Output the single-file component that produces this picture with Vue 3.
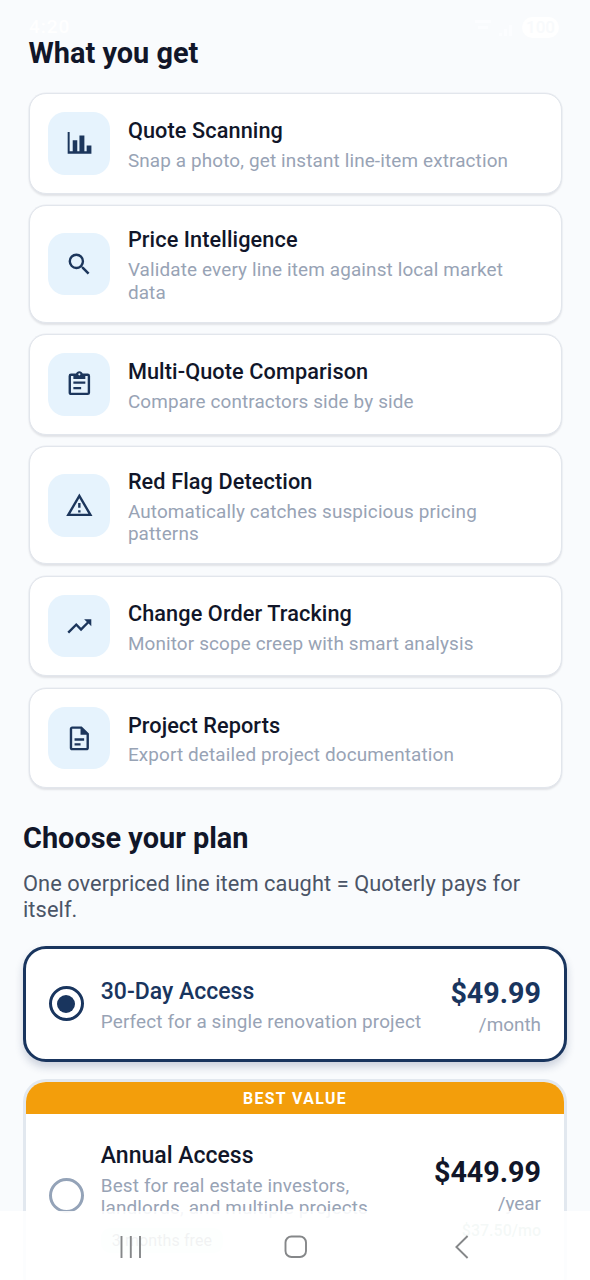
<script setup>
const features = [
  { icon: 'chart', title: 'Quote Scanning', desc: 'Snap a photo, get instant line-item extraction' },
  { icon: 'search', title: 'Price Intelligence', desc: 'Validate every line item against local market data' },
  { icon: 'clipboard', title: 'Multi-Quote Comparison', desc: 'Compare contractors side by side' },
  { icon: 'warning', title: 'Red Flag Detection', desc: 'Automatically catches suspicious pricing patterns' },
  { icon: 'trend', title: 'Change Order Tracking', desc: 'Monitor scope creep with smart analysis' },
  { icon: 'doc', title: 'Project Reports', desc: 'Export detailed project documentation' },
]
</script>

<template>
  <div class="screen">
    <div class="status">
      <span>4:20</span>
      <svg class="signal" viewBox="0 0 44 20"><path d="M2 3h16v3H2zM5 9h10v3H5zM26 16h3v3h-3zM31 12h3v7h-3zM36 8h3v11h-3z" /></svg>
      <span class="battery">100</span>
    </div>

    <main class="content">
      <h2 class="heading get">What you get</h2>
      <section class="features">
        <article v-for="f in features" :key="f.title" class="feature">
          <div class="tile">
            <svg v-if="f.icon === 'chart'" viewBox="0 0 29 29">
              <path d="M2.7 3h2v19.5h22V25h-24zM7.8 11.4h4.6v12H7.8zM14.6 6.6h5v17h-5zM21.9 16.8h4.8v7h-4.8z" />
            </svg>
            <svg v-else-if="f.icon === 'search'" viewBox="0 0 24 24">
              <path d="M15.5 14h-.79l-.28-.27A6.47 6.47 0 0 0 16 9.5 6.5 6.5 0 1 0 9.5 16c1.61 0 3.09-.59 4.23-1.57l.27.28v.79l5 4.99L20.49 19zm-6 0a4.5 4.5 0 1 1 0-9 4.5 4.5 0 0 1 0 9" />
            </svg>
            <svg v-else-if="f.icon === 'clipboard'" viewBox="0 0 24 24">
              <path d="M7 14.2h6.5V16H7zm0-4.5h10v1.9H7zM19 3h-4.18C14.4 1.84 13.3 1 12 1s-2.4.84-2.82 2H5a2 2 0 0 0-2 2v14c0 1.1.9 2 2 2h14a2 2 0 0 0 2-2V5a2 2 0 0 0-2-2m-7-.25a.9.9 0 1 1 0 1.8.9.9 0 0 1 0-1.8M19 19H5V5h2v2.6h10V5h2z" />
            </svg>
            <svg v-else-if="f.icon === 'warning'" viewBox="0 0 24 24">
              <path d="M12 5.99 19.53 19H4.47zM12 2 1 21h22zm1 14h-2v2h2zm0-6h-2v4h2z" />
            </svg>
            <svg v-else-if="f.icon === 'trend'" viewBox="0 0 24 24">
              <path d="m16 6 2.29 2.29-4.88 4.88-4-4L2 16.59 3.41 18l6-6 4 4 6.3-6.29L22 12V6z" />
            </svg>
            <svg v-else viewBox="0 0 24 24">
              <path d="M8 16h5v2H8zm0-4h8v2H8zm6-10H6c-1.1 0-2 .9-2 2v16c0 1.1.89 2 1.99 2H18c1.1 0 2-.9 2-2V8zm4 18H6V4h7v5h5z" />
            </svg>
          </div>
          <div class="copy">
            <h3>{{ f.title }}</h3>
            <p>{{ f.desc }}</p>
          </div>
        </article>
      </section>

      <section class="plans">
        <h2 class="heading choose">Choose your plan</h2>
        <p class="lead">One overpriced line item caught = Quoterly pays for itself.</p>

        <article class="plan selected">
          <span class="radio"><i></i></span>
          <div class="info">
            <h3>30-Day Access</h3>
            <p>Perfect for a single renovation project</p>
          </div>
          <div class="price">
            <strong>$49.99</strong>
            <span>/month</span>
          </div>
        </article>

        <article class="annual">
          <div class="banner">BEST VALUE</div>
          <div class="row">
            <span class="radio"></span>
            <div class="info">
              <h3>Annual Access</h3>
              <p>Best for real estate investors, landlords, and multiple projects</p>
              <span class="free">3 months free</span>
            </div>
            <div class="price">
              <strong>$449.99</strong>
              <span>/year</span>
              <em>$37.50/mo</em>
            </div>
          </div>
        </article>
      </section>
    </main>

    <nav class="navbar">
      <svg class="recents" viewBox="0 0 22 22"><path d="M1.5 0v22M10.8 0v22M20 0v22" /></svg>
      <svg class="home" viewBox="0 0 24 24"><rect x="1.5" y="1.5" width="20.5" height="20.5" rx="6" /></svg>
      <svg class="back" viewBox="0 0 14 24"><path d="M12.6 1 1.4 12l11.2 11" /></svg>
    </nav>
  </div>
</template>

<style>
body {
  background: #f9fbfd;
}
</style>

<style scoped>
* {
  box-sizing: border-box;
  margin: 0;
}
.screen {
  position: relative;
  width: 590px;
  height: 1280px;
  overflow: hidden;
  background: #f9fbfd;
  font-family: Roboto, sans-serif;
  color: #111629;
}
.status {
  height: 38px;
  padding: 17px 31px 0 29px;
  display: flex;
  font-size: 19px;
  line-height: 20px;
  font-weight: 500;
  letter-spacing: 1px;
  color: #fff;
}
.signal {
  width: 44px;
  height: 20px;
  margin-left: auto;
  margin-right: 5px;
  fill: #fcfdff;
}
.battery {
  width: 37px;
  height: 21px;
  border-radius: 11px;
  background: #fff;
  color: #f8fafc;
  text-align: center;
  font-size: 17px;
  letter-spacing: 0;
}
.heading {
  font-size: 28.9px;
  line-height: 34px;
  font-weight: 700;
  white-space: nowrap;
}
.get {
  margin: -2px 0 0 28.5px;
}
.features {
  margin: 23.1px 28.1px 0 28.9px;
  display: flex;
  flex-direction: column;
  gap: 11.4px;
}
.feature {
  display: flex;
  align-items: center;
  gap: 17.6px;
  padding: 17.9px 17.8px;
  border: 1px solid #e2e6ec;
  border-radius: 17px;
  background: #fff;
  box-shadow: 0 0 0 0.5px rgba(226, 230, 236, 0.6), 0 1.5px 2px rgba(15, 23, 42, 0.1);
}
.tile {
  flex: none;
  width: 62.6px;
  height: 62.8px;
  border-radius: 17px;
  background: #e6f3fd;
  display: flex;
  align-items: center;
  justify-content: center;
}
.tile svg {
  width: 28.7px;
  height: 28.7px;
  fill: #1c365c;
}
.copy {
  flex: 1;
  padding: 3.4px 0 0;
}
.copy h3 {
  font-size: 21.7px;
  line-height: 25.8px;
  font-weight: 500;
  letter-spacing: 0.1px;
}
.copy p {
  margin-top: 6.2px;
  font-size: 18.9px;
  line-height: 22.4px;
  letter-spacing: 0.14px;
  color: #98a3b5;
}
.plans {
  margin: 33px 23px 0;
}
.lead {
  margin-top: 16px;
  font-size: 21.8px;
  line-height: 26px;
  letter-spacing: 0.07px;
  color: #4b5567;
}
.plan {
  margin-top: 22.5px;
  height: 116px;
  padding: 0 23px 0 22.5px;
  display: flex;
  align-items: center;
  border: 3px solid #19355e;
  border-radius: 23px;
  background: #fff;
  box-shadow: 0 5px 9px rgba(25, 45, 90, 0.2);
}
.plan .info {
  padding-top: 4px;
}
.plan .price {
  padding-top: 4px;
}
.radio {
  flex: none;
  width: 35px;
  height: 35px;
  border: 3px solid #94a3b8;
  border-radius: 50%;
  display: flex;
  align-items: center;
  justify-content: center;
}
.selected .radio {
  border-color: #19355e;
}
.radio i {
  width: 18px;
  height: 18px;
  border-radius: 50%;
  background: #19355e;
}
.info {
  flex: 1;
  margin-left: 17.3px;
}
.info h3 {
  font-size: 23px;
  line-height: 27px;
  font-weight: 500;
}
.info p {
  margin-top: 6px;
  font-size: 18.9px;
  line-height: 22.4px;
  letter-spacing: 0.14px;
  color: #98a3b5;
}
.selected h3,
.selected strong {
  color: #19355e;
}
.price {
  display: flex;
  flex-direction: column;
  align-items: flex-end;
}
.price strong {
  font-size: 28.7px;
  line-height: 34px;
  font-weight: 700;
}
.price span {
  margin-top: 4px;
  font-size: 18.9px;
  line-height: 22.4px;
  color: #98a3b5;
}
.annual {
  margin-top: 17.5px;
  height: 220px;
  border: 3px solid #e2e8ef;
  border-radius: 23px;
  background: #fff;
  overflow: hidden;
}
.banner {
  height: 32px;
  background: #f39e0b;
  color: #fff;
  font-size: 15.8px;
  line-height: 33px;
  font-weight: 700;
  letter-spacing: 1.43px;
  text-align: center;
}
.row {
  height: 163px;
  padding: 0 23px 0 22.5px;
  display: flex;
  align-items: center;
}
.row .info {
  padding: 3px 50px 0 0;
}
.row .price {
  padding-top: 4px;
}
.free {
  display: inline-block;
  margin-top: 8px;
  padding: 3px 11px;
  border-radius: 9px;
  background: #e8fbef;
  color: #6f7f80;
  font-size: 16px;
  line-height: 19px;
  letter-spacing: 0.1px;
}
.price em {
  margin-top: 5px;
  font-size: 16px;
  line-height: 20px;
  font-style: normal;
  font-weight: 500;
  color: #8fb8a8;
}
.navbar {
  position: absolute;
  left: 0;
  right: 0;
  bottom: 0;
  height: 69px;
  display: grid;
  align-items: center;
  grid-template-columns: 120px 164px 171px auto;
  grid-template-areas: '. recents home back';
  background: rgba(255, 255, 255, 0.9);
  padding-top: 3px;
}
.navbar svg {
  fill: none;
  stroke: #858789;
  stroke-width: 1.9;
}
.recents {
  grid-area: recents;
  width: 22px;
  height: 22px;
}
.home {
  grid-area: home;
  width: 24px;
  height: 24px;
}
.back {
  grid-area: back;
  width: 14px;
  height: 24px;
}
</style>
